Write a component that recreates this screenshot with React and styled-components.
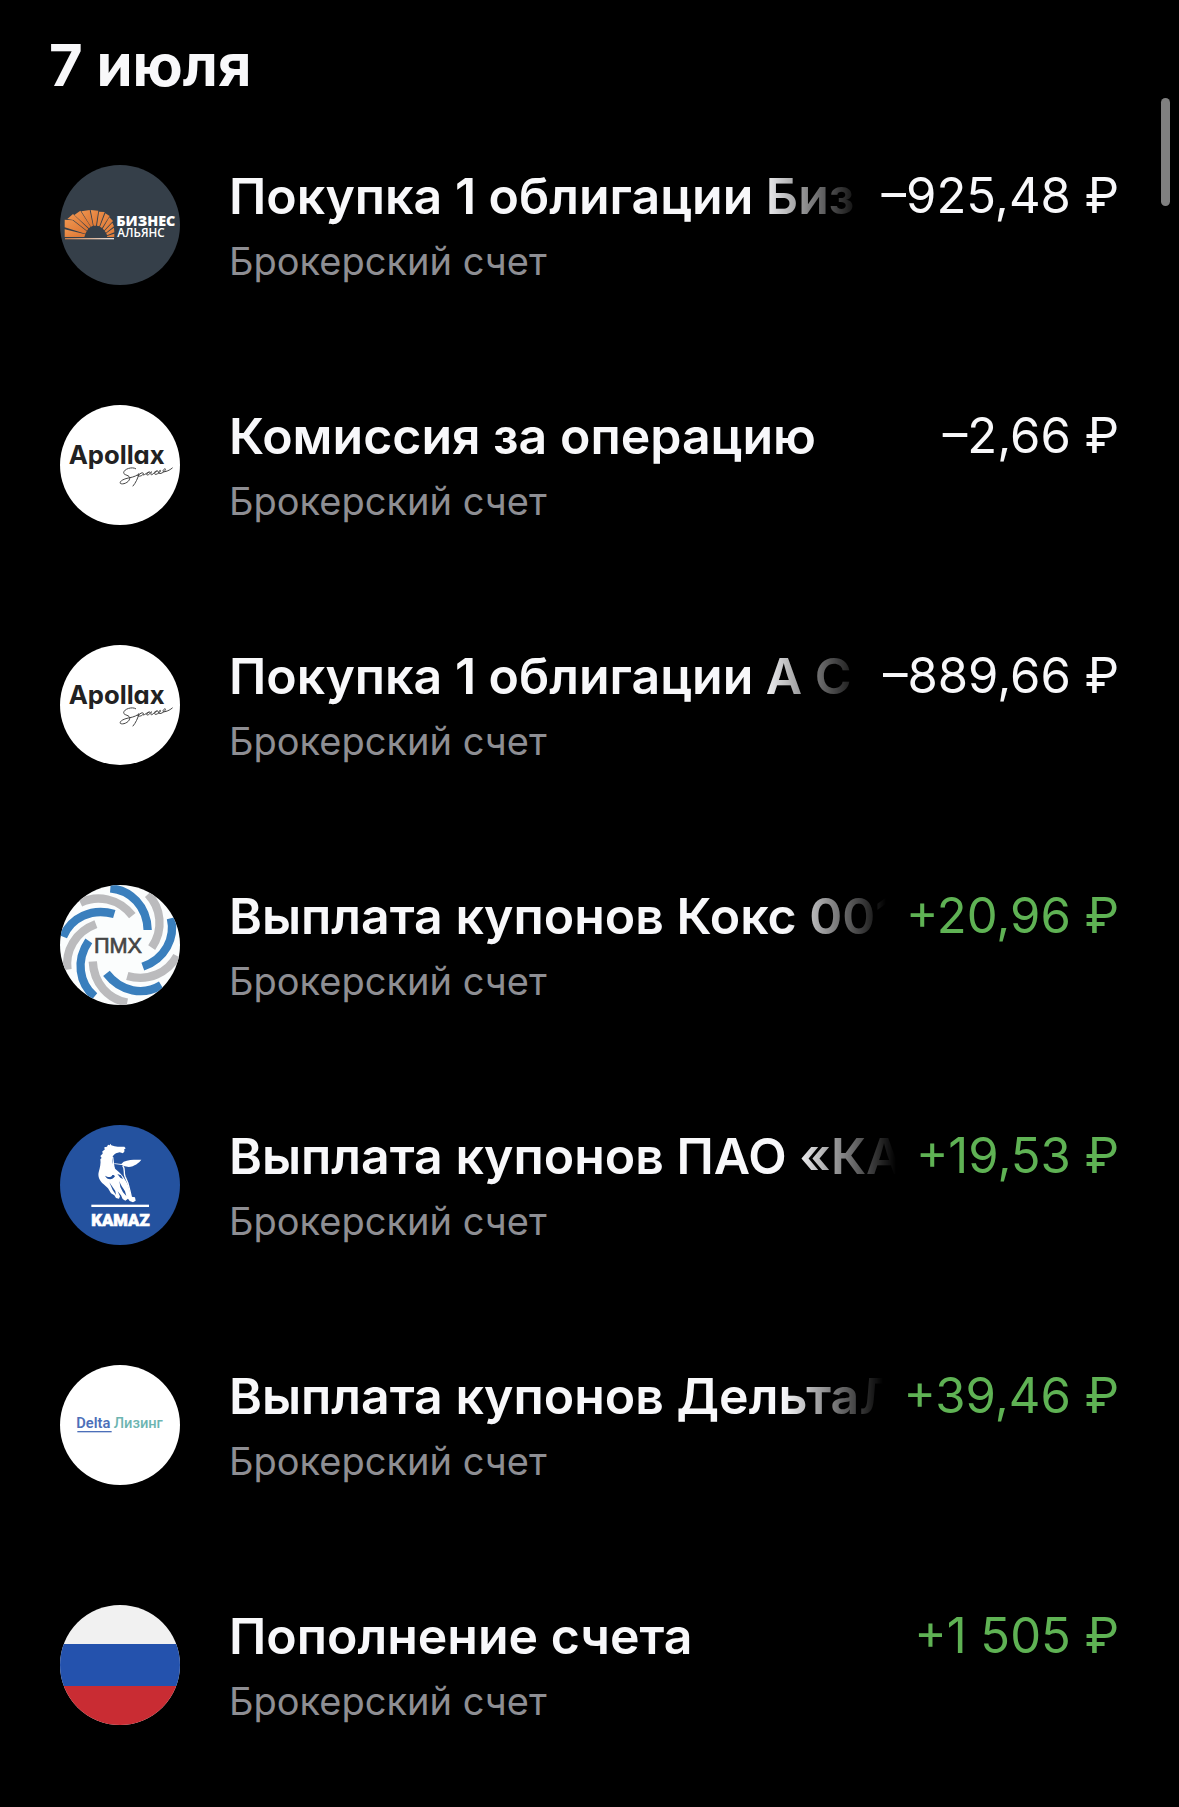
import React from 'react';
import styled, { createGlobalStyle } from 'styled-components'

const GlobalStyle = createGlobalStyle`
  * {
    box-sizing: border-box;
  }
  body {
    margin: 0;
    background: #000;
  }
`

const SPage = styled.main`
  position: relative;
  min-height: 100vh;
  padding: 28px 60px 22px 60px;
  background: #000;
  color: #f8f8fa;
  font-family: 'Inter', 'Roboto', sans-serif;
`

const SDate = styled.h1`
  margin: 0 0 3px -11px;
  font-size: 58px;
  line-height: 74px;
  font-weight: 700;
`

const SList = styled.ul`
  margin: 0;
  padding: 0;
  list-style: none;
`

const SRow = styled.li`
  display: flex;
  align-items: center;
  gap: 49px;
  padding: 60px 0;
`

const SLogo = styled.svg`
  display: block;
  flex: none;
  width: 120px;
  height: 120px;
  border-radius: 50%;
  background: ${({ $background }) => $background || '#fff'};
`

const SInfo = styled.div`
  flex: 1;
  min-width: 0;
  display: flex;
  flex-direction: column;
  gap: 10px;
`

const STopLine = styled.div`
  display: flex;
  gap: 20px;
  line-height: 62px;
`

const STitle = styled.span`
  flex: 1;
  min-width: 0;
  overflow: hidden;
  white-space: nowrap;
  font-size: 50px;
  font-weight: 600;
  mask-image: linear-gradient(to left, transparent, #000 100px);
`

const SAmount = styled.span`
  flex: none;
  white-space: nowrap;
  font-size: 49px;
  font-weight: 400;
  color: ${({ $income }) => ($income ? '#5fb254' : 'inherit')};
`

const SAccount = styled.span`
  font-size: 38px;
  line-height: 48px;
  color: #8e8e93;
`

const SScrollThumb = styled.div`
  position: absolute;
  top: 98px;
  right: 9px;
  width: 9px;
  height: 108px;
  border-radius: 5px;
  background: #808080;
`

const fanPages = [
  '44,223 106,238 103,246 44,246',
  '44,194 68,196 110,229 106,236 44,217',
  '52,192 69,177 115,221 111,227 70,195',
  '73,180 91,167 122,215 117,220',
  '94,169 119,165 129,212 123,215',
  '122,165 145,167 138,212 131,212',
  '147,170 164,171 148,214 141,212',
  '166,175 179,183 156,219 150,215',
  '178,187 189,198 163,226 158,221',
  '187,203 192,214 168,233 164,228',
  '192,218 193,232 171,241 169,235',
  '193,236 193,246 171,246 172,243',
]

const BusinessLogo = () => (
  <SLogo viewBox="30 30 360 360" $background="#353f49" aria-hidden="true">
    <defs>
      <linearGradient id="fan" x1="0" y1="0" x2="1" y2="1">
        <stop offset="0" stopColor="#f0954f" />
        <stop offset="1" stopColor="#db7432" />
      </linearGradient>
      <linearGradient id="fanBase" x1="0" y1="0" x2="1" y2="0">
        <stop offset="0" stopColor="#c87c4a" />
        <stop offset="1" stopColor="#e9e4e0" />
      </linearGradient>
    </defs>
    {fanPages.map(points => <polygon key={points} points={points} fill="url(#fan)" />)}
    <rect x="45" y="249" width="147" height="4" fill="url(#fanBase)" />
    <text x="199" y="212" fontFamily="Open Sans" fontSize="43" fontWeight="800" fill="#fff">БИЗНЕС</text>
    <text x="202" y="246" fontFamily="Open Sans" fontSize="35" fontWeight="600" fill="#fff">АЛЬЯНС</text>
  </SLogo>
)

const ApollaxLogo = () => (
  <SLogo viewBox="30 30 360 360" aria-hidden="true">
    <text
      x="56"
      y="208"
      fontFamily="Inter"
      fontSize="77"
      fontWeight="700"
      fill="#222"
      style={{ fontFeatureSettings: "'cv11'" }}
    >
      Apollax
    </text>
    <g fill="none" stroke="#444" strokeWidth="3" strokeLinecap="round" strokeLinejoin="round">
      <path d="M257 221 C246 214 222 222 221 233 C221 242 241 239 239 251 C237 263 217 270 211 265 C208 258 222 251 240 248" />
      <path d="M240 248 C252 246 262 241 267 236 C264 249 257 264 249 273 M264 242 C270 233 281 231 280 236 C279 242 267 246 263 242" />
      <path d="M280 240 C286 240 291 231 299 231 C292 232 287 240 292 240 C297 240 302 233 304 230 C301 239 303 241 308 238 C312 232 319 226 323 228 C316 229 309 239 318 238 C326 236 334 228 331 226 C326 227 320 238 333 235 C343 232 349 222 345 221 C339 223 335 233 345 230 C354 228 361 224 367 219" />
    </g>
  </SLogo>
)

const PmhLogo = () => (
  <SLogo viewBox="30 30 360 360" $background="#fbfdfd" aria-hidden="true">
    <g fill="none" strokeWidth="25">
      {[0, 72, 144, 216, 288].map(angle => (
        <g key={angle} transform={`rotate(${angle} 210 210)`}>
          <path d="M181 40 C242 45 291 94 293 165" stroke="#3a7fbd" />
          <path d="M91 83 C142 59 205 69 247 122" stroke="#bbbbbd" />
        </g>
      ))}
    </g>
    <text x="132" y="233" fontFamily="Liberation Sans" fontSize="65" fill="#454545" stroke="#454545" strokeWidth="2">ПМХ</text>
  </SLogo>
)

const KamazLogo = () => (
  <SLogo viewBox="30 30 360 360" $background="#24529f" aria-hidden="true">
    <path
      fill="#fff"
      d="M181 86 L184 91 C192 94 200 96 207 95 L223 95 L227 100 L222 104 L224 108 L219 115 L209 112 L198 115
      C190 120 186 126 186 134 C187 144 191 153 196 162 C203 168 211 174 216 181 C223 191 231 202 235 214
      L241 234 L244 245 L255 247 L257 257 L249 262 L239 258 L234 251 L226 257 L218 252 L213 241 L203 229
      L210 244 L207 251 L198 249 L193 241 L183 235 L174 220 L161 208 C148 198 143 184 146 172
      C150 157 153 145 151 133 L155 129 L151 123 L158 116 L157 109 L164 104 L163 97 L171 95 L174 89 L179 91 Z"
    />
    <path
      fill="#fff"
      d="M193 145 L214 147 L221 140 C237 133 256 134 274 134 C267 144 253 154 236 156 L221 153 L216 150 L193 147 Z"
    />
    <path
      d="M188 126 L192 159 M218 152 C227 162 220 173 225 184 C231 196 236 208 239 224 L244 246"
      fill="none"
      stroke="#fff"
      strokeWidth="4"
    />
    <path
      d="M165 182 C171 195 187 197 195 184 C192 180 191 179 187 180 C184 188 174 188 165 182 Z M178 202 L196 228 L198 240
      L188 225 Z M208 198 C212 211 219 218 225 229 L229 243 L219 232 L211 216 Z M202 177 L211 188 L219 192 L213 181 Z"
      fill="#24529f"
    />
    <rect x="124" y="269" width="173" height="7" fill="#fff" />
    <text x="124" y="332" fontFamily="Roboto" fontSize="50" fontWeight="900" fill="#fff" stroke="#fff" strokeWidth="2">KAMAZ</text>
  </SLogo>
)

const DeltaLogo = () => (
  <SLogo viewBox="30 30 360 360" aria-hidden="true">
    <text x="79" y="220" fontFamily="Roboto" fontSize="44" fontWeight="600" fill="#4c6fb9">Delta</text>
    <rect x="82" y="228" width="103" height="4" fill="#4c6fb9" />
    <text x="191" y="220" fontFamily="Roboto" fontSize="44" fontWeight="500" fill="#6cb5b1">Лизинг</text>
  </SLogo>
)

const FlagLogo = () => (
  <SLogo viewBox="30 30 360 360" $background="#f1f1f1" aria-hidden="true">
    <rect x="30" y="147" width="360" height="126" fill="#2452ad" />
    <rect x="30" y="273" width="360" height="117" fill="#c92c33" />
  </SLogo>
)

const operations = [
  { id: 1, Logo: BusinessLogo, title: 'Покупка 1 облигации Биз', amount: '–925,48 ₽' },
  { id: 2, Logo: ApollaxLogo, title: 'Комиссия за операцию', amount: '–2,66 ₽' },
  { id: 3, Logo: ApollaxLogo, title: 'Покупка 1 облигации А С', amount: '–889,66 ₽' },
  { id: 4, Logo: PmhLogo, title: 'Выплата купонов Кокс 001', amount: '+20,96 ₽', income: true },
  { id: 5, Logo: KamazLogo, title: 'Выплата купонов ПАО «КА', amount: '+19,53 ₽', income: true },
  { id: 6, Logo: DeltaLogo, title: 'Выплата купонов ДельтаЛ', amount: '+39,46 ₽', income: true },
  { id: 7, Logo: FlagLogo, title: 'Пополнение счета', amount: '+1 505 ₽', income: true },
]

function App() {
  return (
    <SPage>
      <GlobalStyle />
      <SDate>7 июля</SDate>
      <SList>
        {operations.map(({ id, Logo, title, amount, income }) => (
          <SRow key={id}>
            <Logo />
            <SInfo>
              <STopLine>
                <STitle>{title}</STitle>
                <SAmount $income={income}>{amount}</SAmount>
              </STopLine>
              <SAccount>Брокерский счет</SAccount>
            </SInfo>
          </SRow>
        ))}
      </SList>
      <SScrollThumb />
    </SPage>
  );
}

export default App;
